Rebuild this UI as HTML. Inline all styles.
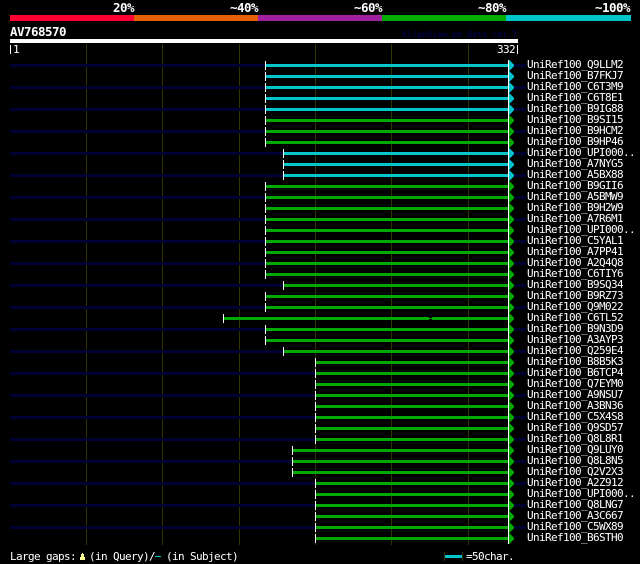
<!DOCTYPE html>
<html><head><meta charset="utf-8"><title>AV768570</title>
<style>
html,body{margin:0;padding:0;background:#000;width:640px;height:564px;overflow:hidden}
svg{display:block}
text{font-family:"DejaVu Sans Mono","Liberation Mono",monospace;font-size:11px;letter-spacing:-0.62px;fill:#fff;white-space:pre}
.b{font-weight:bold;font-size:12.5px;letter-spacing:-0.52px}
.r{shape-rendering:crispEdges}
</style></head><body>
<svg width="640" height="564" viewBox="0 0 640 564" xmlns="http://www.w3.org/2000/svg">
<defs>
<pattern id="tri" x="508" y="60" width="7" height="11" patternUnits="userSpaceOnUse"><rect x="0" y="0" width="1" height="11" fill="#fff" shape-rendering="crispEdges"/><path d="M1 0L6 5L6 6L1 11z" fill="#00aa00" shape-rendering="crispEdges"/></pattern>
</defs>
<g class="r">
<rect x="10" y="15" width="124" height="6" fill="#ff0033"/>
<rect x="134" y="15" width="124" height="6" fill="#e66000"/>
<rect x="258" y="15" width="124" height="6" fill="#a020a0"/>
<rect x="382" y="15" width="124" height="6" fill="#00aa00"/>
<rect x="506" y="15" width="125" height="6" fill="#00c5cd"/>
<rect x="10" y="39" width="508" height="4" fill="#fff"/>
<path fill="#333300" d="M86 44h1v501h-1zM162 44h1v501h-1zM239 44h1v501h-1zM315 44h1v501h-1zM391 44h1v501h-1zM468 44h1v501h-1z"/>
<path fill="#000033" d="M10 64h255v3h-255zM10 86h255v3h-255zM10 108h255v3h-255zM10 130h255v3h-255zM10 152h273v3h-273zM10 174h273v3h-273zM10 196h255v3h-255zM10 218h255v3h-255zM10 240h255v3h-255zM10 262h255v3h-255zM10 284h273v3h-273zM10 306h255v3h-255zM10 328h255v3h-255zM10 350h273v3h-273zM10 372h305v3h-305zM10 394h305v3h-305zM10 416h305v3h-305zM10 438h305v3h-305zM10 460h282v3h-282zM10 482h305v3h-305zM10 504h305v3h-305zM10 526h305v3h-305z"/>
<path fill="#000033" d="M514 64h12v3h-12zM514 86h12v3h-12zM514 108h12v3h-12zM514 130h12v3h-12zM514 152h12v3h-12zM514 174h12v3h-12zM514 196h12v3h-12zM514 218h12v3h-12zM514 240h12v3h-12zM514 262h12v3h-12zM514 284h12v3h-12zM514 306h12v3h-12zM514 328h12v3h-12zM514 350h12v3h-12zM514 372h12v3h-12zM514 394h12v3h-12zM514 416h12v3h-12zM514 438h12v3h-12zM514 460h12v3h-12zM514 482h12v3h-12zM514 504h12v3h-12zM514 526h12v3h-12z"/>
<path fill="#00c5cd" d="M266 64h242v3h-242zM266 75h242v3h-242zM266 86h242v3h-242zM266 97h242v3h-242zM266 108h242v3h-242zM284 152h224v3h-224zM284 163h224v3h-224zM284 174h224v3h-224z"/>
<path fill="#00aa00" d="M266 119h242v3h-242zM266 130h242v3h-242zM266 141h242v3h-242zM266 185h242v3h-242zM266 196h242v3h-242zM266 207h242v3h-242zM266 218h242v3h-242zM266 229h242v3h-242zM266 240h242v3h-242zM266 251h242v3h-242zM266 262h242v3h-242zM266 273h242v3h-242zM284 284h224v3h-224zM266 295h242v3h-242zM266 306h242v3h-242zM224 317h205v3h-205zM429 318h3v1h-3zM432 317h76v3h-76zM266 328h242v3h-242zM266 339h242v3h-242zM284 350h224v3h-224zM316 361h192v3h-192zM316 372h192v3h-192zM316 383h192v3h-192zM316 394h192v3h-192zM316 405h192v3h-192zM316 416h192v3h-192zM316 427h192v3h-192zM316 438h192v3h-192zM293 449h215v3h-215zM293 460h215v3h-215zM293 471h215v3h-215zM316 482h192v3h-192zM316 493h192v3h-192zM316 504h192v3h-192zM316 515h192v3h-192zM316 526h192v3h-192zM316 537h192v3h-192z"/>
<rect x="508" y="60" width="7" height="484" fill="url(#tri)"/>
<path fill="#00c5cd" d="M509 60l5 5v1l-5 5zM509 71l5 5v1l-5 5zM509 82l5 5v1l-5 5zM509 93l5 5v1l-5 5zM509 104l5 5v1l-5 5zM509 148l5 5v1l-5 5zM509 159l5 5v1l-5 5zM509 170l5 5v1l-5 5z"/>
<path fill="#fff" d="M265 61h1v9h-1zM265 72h1v9h-1zM265 83h1v9h-1zM265 94h1v9h-1zM265 105h1v9h-1zM265 116h1v9h-1zM265 127h1v9h-1zM265 138h1v9h-1zM283 149h1v9h-1zM283 160h1v9h-1zM283 171h1v9h-1zM265 182h1v9h-1zM265 193h1v9h-1zM265 204h1v9h-1zM265 215h1v9h-1zM265 226h1v9h-1zM265 237h1v9h-1zM265 248h1v9h-1zM265 259h1v9h-1zM265 270h1v9h-1zM283 281h1v9h-1zM265 292h1v9h-1zM265 303h1v9h-1zM223 314h1v9h-1zM265 325h1v9h-1zM265 336h1v9h-1zM283 347h1v9h-1zM315 358h1v9h-1zM315 369h1v9h-1zM315 380h1v9h-1zM315 391h1v9h-1zM315 402h1v9h-1zM315 413h1v9h-1zM315 424h1v9h-1zM315 435h1v9h-1zM292 446h1v9h-1zM292 457h1v9h-1zM292 468h1v9h-1zM315 479h1v9h-1zM315 490h1v9h-1zM315 501h1v9h-1zM315 512h1v9h-1zM315 523h1v9h-1zM315 534h1v9h-1z"/>
<rect x="10" y="45" width="1" height="9" fill="#fff"/>
<rect x="517" y="45" width="1" height="9" fill="#fff"/>
<path fill="#ffff99" d="M82 553h1v1h1v3h1v3h-5v-3h1v-3h1z"/>
<rect x="155" y="556" width="6" height="1" fill="#00c5cd"/>
<rect x="444" y="552" width="1" height="9" fill="#333300"/>
<rect x="462" y="552" width="1" height="9" fill="#333300"/>
<rect x="445" y="555" width="17" height="3" fill="#00c5cd"/>
</g>
<text class="b" x="113" y="12">20%</text>
<text class="b" x="230" y="12">~40%</text>
<text class="b" x="354" y="12">~60%</text>
<text class="b" x="478" y="12">~80%</text>
<text class="b" x="595" y="12">~100%</text>
<text class="b" x="10" y="36">AV768570</text>
<text x="402" y="37" style="font-size:8.33px;letter-spacing:0;font-weight:bold;fill:#000044">AlignView.pm Beta rel.7</text>
<text x="13" y="53">1</text>
<text x="497" y="53">332</text>
<text x="527" y="68">UniRef100_Q9LLM2</text>
<text x="527" y="79">UniRef100_B7FKJ7</text>
<text x="527" y="90">UniRef100_C6T3M9</text>
<text x="527" y="101">UniRef100_C6T8E1</text>
<text x="527" y="112">UniRef100_B9IG88</text>
<text x="527" y="123">UniRef100_B9SI15</text>
<text x="527" y="134">UniRef100_B9HCM2</text>
<text x="527" y="145">UniRef100_B9HP46</text>
<text x="527" y="156">UniRef100_UPI000..</text>
<text x="527" y="167">UniRef100_A7NYG5</text>
<text x="527" y="178">UniRef100_A5BX88</text>
<text x="527" y="189">UniRef100_B9GII6</text>
<text x="527" y="200">UniRef100_A5BMW9</text>
<text x="527" y="211">UniRef100_B9H2W9</text>
<text x="527" y="222">UniRef100_A7R6M1</text>
<text x="527" y="233">UniRef100_UPI000..</text>
<text x="527" y="244">UniRef100_C5YAL1</text>
<text x="527" y="255">UniRef100_A7PP41</text>
<text x="527" y="266">UniRef100_A2Q4Q8</text>
<text x="527" y="277">UniRef100_C6TIY6</text>
<text x="527" y="288">UniRef100_B9SQ34</text>
<text x="527" y="299">UniRef100_B9RZ73</text>
<text x="527" y="310">UniRef100_Q9M022</text>
<text x="527" y="321">UniRef100_C6TL52</text>
<text x="527" y="332">UniRef100_B9N3D9</text>
<text x="527" y="343">UniRef100_A3AYP3</text>
<text x="527" y="354">UniRef100_Q259E4</text>
<text x="527" y="365">UniRef100_B8B5K3</text>
<text x="527" y="376">UniRef100_B6TCP4</text>
<text x="527" y="387">UniRef100_Q7EYM0</text>
<text x="527" y="398">UniRef100_A9NSU7</text>
<text x="527" y="409">UniRef100_A3BN36</text>
<text x="527" y="420">UniRef100_C5X4S8</text>
<text x="527" y="431">UniRef100_Q9SD57</text>
<text x="527" y="442">UniRef100_Q8L8R1</text>
<text x="527" y="453">UniRef100_Q9LUY0</text>
<text x="527" y="464">UniRef100_Q8L8N5</text>
<text x="527" y="475">UniRef100_Q2V2X3</text>
<text x="527" y="486">UniRef100_A2Z912</text>
<text x="527" y="497">UniRef100_UPI000..</text>
<text x="527" y="508">UniRef100_Q8LNG7</text>
<text x="527" y="519">UniRef100_A3C667</text>
<text x="527" y="530">UniRef100_C5WX89</text>
<text x="527" y="541">UniRef100_B6STH0</text>
<text x="10" y="560">Large gaps:</text>
<text x="89" y="560">(in Query)/</text>
<text x="166" y="560">(in Subject)</text>
<text x="466" y="560">=50char.</text>
</svg>
</body></html>
